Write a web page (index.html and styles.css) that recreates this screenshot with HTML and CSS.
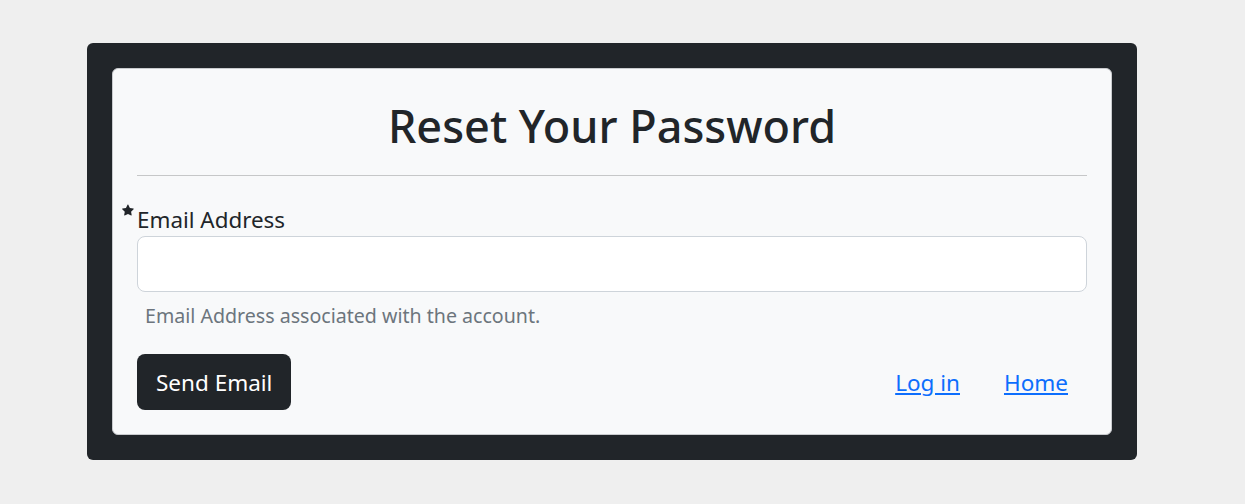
FILE: index.html
```html
<!DOCTYPE html>
<html lang="en">
<head>
  <meta charset="UTF-8" />
  <meta name="viewport" content="width=device-width, initial-scale=1.0"/>
  <title>Reset Your Password</title>
  <link rel="stylesheet" href="styles.css">
</head>
<body>

  <!-- Reset password panel -->
  <div class="frame">
    <div class="card">
      <h1>Reset Your Password</h1>
      <hr />

      <form class="reset-form" onsubmit="return false;">
        <label class="field-label" for="email">
          <svg class="required" viewBox="0 0 16 16" width="12" height="12" aria-hidden="true">
            <path d="M3.6 15.4c-.4.2-.8-.2-.7-.6l.8-4.6L.3 6.9c-.3-.3-.2-.9.3-.9l4.7-.7L7.4 1c.2-.4.8-.4 1 0l2.1 4.3 4.7.7c.5.1.6.6.3.9l-3.4 3.3.8 4.6c.1.4-.4.8-.7.6L8 13.2l-4.4 2.2z"/>
          </svg>
          Email Address
        </label>
        <input class="field-input" id="email" type="email" name="email" />
        <div class="field-help">Email Address associated with the account.</div>

        <div class="actions">
          <button class="send-btn" type="submit">Send Email</button>
          <div class="links">
            <a href="#">Log in</a>
            <a href="#">Home</a>
          </div>
        </div>
      </form>
    </div>
  </div>

</body>
</html>
```

FILE: styles.css
```css
body {
  font-family: 'Noto Sans', sans-serif;
  background: #efefef;
  color: #212529;
  margin: 0;
  padding: 0;
}

.frame {
  width: 1050px;
  margin: 43px 0 0 87px;
  padding: 25px;
  box-sizing: border-box;
  background: #212529;
  border-radius: 6px;
}

.card {
  background: #f8f9fa;
  border: 1px solid #c9cbce;
  border-radius: 6px;
  padding: 24px;
}

.card h1 {
  margin: 0;
  padding-top: 6px;
  text-align: center;
  font-size: 45px;
  font-weight: 500;
  line-height: 1.2;
}

.card hr {
  margin: 22px 0 29px;
  border: 0;
  border-top: 1px solid #c6c7c8;
}

.field-label {
  position: relative;
  display: block;
  font-size: 22.4px;
  line-height: 30px;
  margin-bottom: 1px;
}

.required {
  position: absolute;
  left: -15px;
  top: -1px;
  fill: #212529;
}

.field-input {
  display: block;
  width: 100%;
  box-sizing: border-box;
  height: 56px;
  padding: 8px 16px;
  font-size: 20px;
  font-family: inherit;
  border: 1px solid #ced4da;
  border-radius: 8px;
  background: #fff;
}

.field-help {
  margin: 10px 0 0 8px;
  font-size: 19.6px;
  line-height: 28px;
  color: #6c757d;
}

.actions {
  display: flex;
  align-items: center;
  justify-content: space-between;
  margin-top: 24px;
}

.send-btn {
  height: 56px;
  padding: 0 19px;
  font-family: inherit;
  font-size: 22.5px;
  color: #fff;
  background: #212529;
  border: none;
  border-radius: 8px;
  cursor: pointer;
}

.links {
  display: flex;
  gap: 44px;
  padding-right: 19px;
}

.links a {
  font-size: 22.5px;
  color: #0d6efd;
}
```
